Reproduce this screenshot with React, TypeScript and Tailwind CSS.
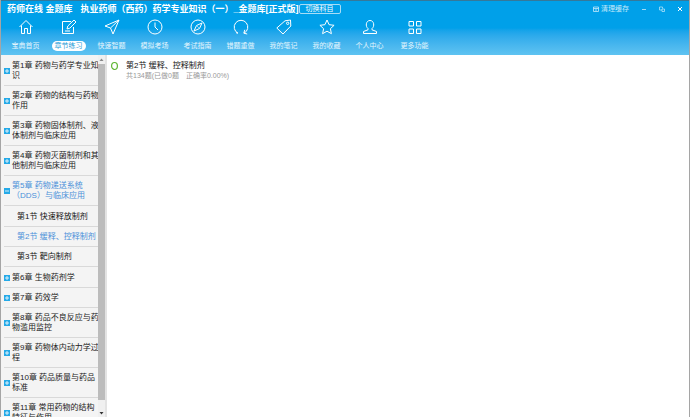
import { useState } from "react";
import type { ReactNode } from "react";

const NAV: { label: string; icon: ReactNode }[] = [
  { label: "宝典首页", icon: <path d="M1.5 8 8 1.5 14.5 8M3.5 6.5v8h3v-5h3v5h3v-8" /> },
  { label: "章节练习", icon: <path d="M10 2.5H1.5v12h11V8M6 10l.8-3L13 1l2 2-6.2 6.2zM4 12h5" /> },
  { label: "快速智题", icon: <path d="M15 1 1 7l5.5 2L9 15zM15 1 6.5 9" /> },
  { label: "模拟考场", icon: <><circle cx="8" cy="8" r="7" /><path d="M8 3.5V8l3 3" /></> },
  { label: "考试指南", icon: <><circle cx="8" cy="8" r="7" /><path d="m12 4-2.5 5.5L4 12l2.5-5.5zM7.5 7.5l1 1" /></> },
  { label: "错题重做", icon: <path d="M5 14.2a6.8 6.8 0 1 1 6 0M11.8 10.8l-1 3.4 3.4.8M5 14.2l-2-.5" /> },
  { label: "我的笔记", icon: <><path d="M9 1.8 14.5 1l.3 6L7 15 .8 9z" /><circle cx="11.7" cy="4.3" r="1.2" /></> },
  { label: "我的收藏", icon: <path d="m8 1 2.1 4.7 5 .6-3.7 3.4 1 5L8 12.2l-4.4 2.5 1-5L.9 6.3l5-.6z" /> },
  { label: "个人中心", icon: <path d="M6 9.5C3.2 7.5 3.8 1.5 8 1.5s4.8 6 2 8v1.3l4.500 1.700v2h-13v-2L6 10.800z" /> },
  { label: "更多功能", icon: <path d="M2 2.5h4.500v4.500H2zM9.500 2.500H14v4.500H9.500zM2 10h4.500v4.500H2zM9.500 10H14v4.500H9.500z" /> },
];

const CHAPTERS = [
  { lines: ["第1章 药物与药学专业知", "识"] },
  { lines: ["第2章 药物的结构与药物", "作用"] },
  { lines: ["第3章 药物固体制剂、液", "体制剂与临床应用"] },
  { lines: ["第4章 药物灭菌制剂和其", "他制剂与临床应用"] },
  {
    lines: ["第5章 药物递送系统", "（DDS）与临床应用"],
    sections: ["第1节 快速释放制剂", "第2节 缓释、控释制剂", "第3节 靶向制剂"],
  },
  { lines: ["第6章 生物药剂学"] },
  { lines: ["第7章 药效学"] },
  { lines: ["第8章 药品不良反应与药", "物滥用监控"] },
  { lines: ["第9章 药物体内动力学过", "程"] },
  { lines: ["第10章 药品质量与药品", "标准"] },
  { lines: ["第11章 常用药物的结构", "特征与作用"] },
];

function Header() {
  const [active, setActive] = useState("章节练习");

  return (
    <header className="shrink-0 border-t border-[#35789a] bg-linear-to-b from-[#00a0e9] from-50% to-[#5fc3f1] pb-1 text-white">
      <div className="flex h-4 items-center pl-1.5">
        <span className="text-[9px] leading-3 font-bold whitespace-nowrap">药师在线 金题库</span>
        <h1 className="ml-2 text-[9px] leading-3 font-bold whitespace-nowrap">
          执业药师（西药）药学专业知识（一）_金题库[正式版]
        </h1>
        <button className="h-[10px] w-[42px] shrink-0 rounded-xs border border-[#a8ddf6] text-[7px] leading-[8px]">切换科目</button>
        <div className="ml-auto flex items-center gap-3 pr-1.5">
          <button className="flex items-center gap-0.5 text-[7px] leading-[10px] text-[#c4e9fa]">
            <svg viewBox="0 0 6 6" className="size-1.5" fill="none" stroke="currentColor" strokeWidth="0.8">
              <path d="M.5 1h5v4.500h-5zM.5 2.500h5M2 4h2" />
            </svg>
            清理缓存
          </button>
          <button aria-label="最小化">
            <svg viewBox="0 0 6 6" className="size-1.5" stroke="#c4e9fa" strokeWidth="0.8"><path d="M1 3.500h4" /></svg>
          </button>
          <button aria-label="还原">
            <svg viewBox="0 0 6 6" className="size-1.5" fill="none" stroke="#c4e9fa" strokeWidth="0.7"><path d="M3 4H.5V1h3v1.500M3 3h2.500v2.500H3z" /></svg>
          </button>
          <button aria-label="关闭">
            <svg viewBox="0 0 6 6" className="size-1.5" stroke="white" strokeWidth="1"><path d="m1 1 4 4m0-4L1 5" /></svg>
          </button>
        </div>
      </div>

      <nav className="flex pt-0.5 pl-[3px]">
        {NAV.map((item) => (
          <button key={item.label} onClick={() => setActive(item.label)} className="flex w-[43px] flex-col items-center gap-1.5 last:ml-0.5">
            <svg viewBox="0 0 16 16" className="size-4" fill="none" stroke="currentColor" strokeWidth="1" strokeLinejoin="round">
              {item.icon}
            </svg>
            <span className={`rounded-full px-[3px] text-[7px] leading-[10px] whitespace-nowrap ${active === item.label ? "bg-white text-[#269bd6]" : "text-[#e4f5fd]"}`}>
              {item.label}
            </span>
          </button>
        ))}
      </nav>
    </header>
  );
}

function Sidebar() {
  const [open, setOpen] = useState(4);
  const [section, setSection] = useState("第2节 缓释、控释制剂");

  return (
    <aside className="flex w-[106px] shrink-0 border-r-2 border-[#e3e3e3] bg-[#f4f4f4]">
      <ul className="w-[97px] shrink-0 pt-px pl-[3px]">
        {CHAPTERS.map((chapter, i) => (
          <li key={i}>
            <button
              onClick={() => setOpen(open === i ? -1 : i)}
              className={`flex w-full items-center gap-0.5 border-b border-[#d9d9d9] pt-[5px] pb-1 text-left ${open === i ? "text-[#4a90d9]" : "text-[#222]"}`}
            >
              <svg viewBox="0 0 6 6" className="size-1.5 shrink-0">
                <rect width="6" height="6" fill="#25aae8" />
                <path d={open === i ? "M1 3h4" : "M1 3h4M3 1v4"} stroke="white" strokeWidth="0.8" />
              </svg>
              <span className="text-[8px] leading-[10px] whitespace-nowrap">
                {chapter.lines.map((line) => (
                  <span key={line} className="block">{line}</span>
                ))}
              </span>
            </button>
            {chapter.sections && open === i && (
              <ul className="py-px">
                {chapter.sections.map((s) => (
                  <li key={s}>
                    <button
                      onClick={() => setSection(s)}
                      className={`block w-full border-b border-[#d9d9d9] pt-[5px] pb-1 pl-[13px] text-left text-[8px] leading-[10px] whitespace-nowrap ${section === s ? "text-[#4a90d9]" : "text-[#111]"}`}
                    >
                      {s}
                    </button>
                  </li>
                ))}
              </ul>
            )}
          </li>
        ))}
      </ul>

      {/* scrollbar */}
      <div className="flex w-[7px] flex-col items-center bg-[#f0f0f0]">
        <svg viewBox="0 0 7 9" className="h-[9px] w-[7px] shrink-0"><path d="M1.500 6h4L3.500 3.500z" fill="#888" /></svg>
        <div className="w-full grow bg-[#bcbcbc]" />
        <svg viewBox="0 0 7 9" className="mt-2 h-[9px] w-[7px] shrink-0"><path d="M1.500 4h4L3.500 6.500z" fill="#333" /></svg>
      </div>
    </aside>
  );
}

export default function App() {
  return (
    <div className="flex h-screen flex-col overflow-hidden border-x border-[#a5a5a5] bg-white font-['Liberation_Sans','Noto_Sans_CJK_SC',sans-serif]">
      <Header />
      <div className="flex min-h-0 grow overflow-hidden">
        <Sidebar />
        <main className="flex grow items-start gap-2 pt-1.5 pl-1">
          <svg viewBox="0 0 7 10" className="h-[10px] w-[7px]" fill="none" stroke="#5db531" strokeWidth="1.2">
            <ellipse cx="3.5" cy="5" rx="2.9" ry="3.5" />
          </svg>
          <div className="leading-[10px]">
            <h2 className="text-[8px] text-[#111]">第2节 缓释、控释制剂</h2>
            <p className="text-[7px] text-[#999]">共134题(已做0题&emsp;正确率0.00%)</p>
          </div>
        </main>
      </div>
    </div>
  );
}
